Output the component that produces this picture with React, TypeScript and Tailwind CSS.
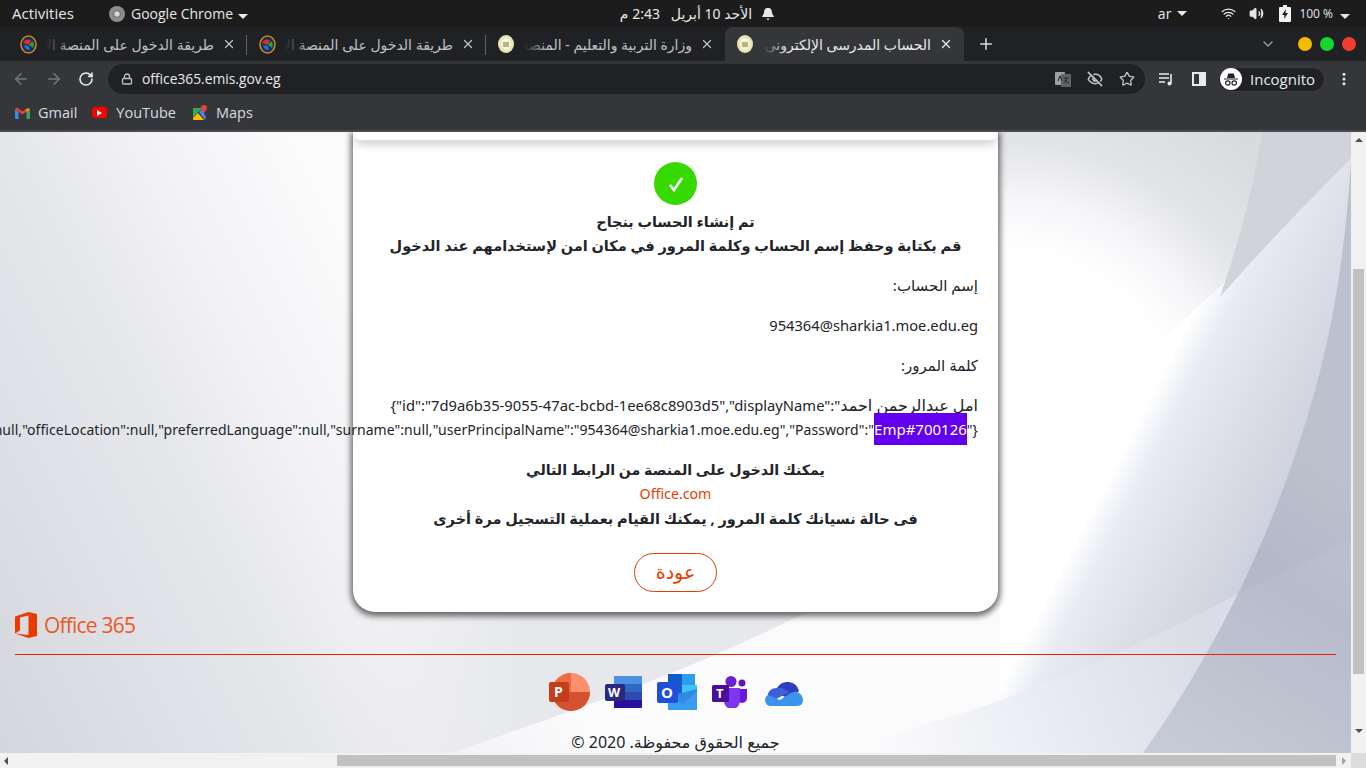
import { ArrowLeft, ArrowRight, ChevronDown, EllipsisVertical, EyeOff, Lock, Plus, RotateCw, Star, Volume2, Wifi, X } from 'lucide-react';

const arabic = 'font-["Noto_Sans","DejaVu_Sans",sans-serif]';

function Caret() {
  return <span className="inline-block h-0 w-0 border-x-[5px] border-t-[5px] border-x-transparent border-t-[#e8e8e8]" />;
}

function SchoolIcon() {
  return (
    <svg width="16" height="18" viewBox="0 0 16 18" className="shrink-0">
      <ellipse cx="8" cy="9" rx="8" ry="9" fill="#e9e6b4" />
      <ellipse cx="8" cy="9" rx="5" ry="6" fill="#f6f5e0" />
      <path d="M5 7h6v5H5z" fill="#b9b57c" />
    </svg>
  );
}

function PlatformIcon() {
  return (
    <svg width="17" height="19" viewBox="0 0 17 19" className="shrink-0">
      <ellipse cx="8.5" cy="9.5" rx="7.5" ry="8.5" fill="#1a2a5a" stroke="#c98a12" strokeWidth="1.6" />
      <path d="M3 8a6 6 0 0 1 8-3l-2 5z" fill="#d8302a" />
      <path d="M9 10l3-4a6 6 0 0 1 1 7z" fill="#2f9e44" />
      <path d="M4 10l5 1 1 4a6 6 0 0 1-6-5z" fill="#2a6fd0" />
    </svg>
  );
}

type TabProps = { title: string; icon: 'school' | 'platform'; active?: boolean; divider?: boolean };

function Tab({ title, icon, active, divider }: TabProps) {
  return (
    <div className={`relative flex h-[34px] w-[239px] shrink-0 items-center px-[11px] ${active ? 'rounded-t-lg bg-[#35363a]' : ''}`}>
      <span className="flex w-[18px] justify-center">{icon === 'school' ? <SchoolIcon /> : <PlatformIcon />}</span>
      <div dir="rtl" className={`relative ml-[9px] min-w-0 flex-1 overflow-hidden whitespace-nowrap text-[14px] ${active ? 'text-[#e8eaed]' : 'text-[#bdc1c6]'} ${arabic}`}>
        {title}
        <span className={`absolute inset-y-0 left-0 w-6 bg-gradient-to-r to-transparent ${active ? 'from-[#35363a]' : 'from-[#202124]'}`} />
      </div>
      <X size={14} strokeWidth={2.2} className={`ml-2 shrink-0 ${active ? 'text-[#e8eaed]' : 'text-[#bdc1c6]'}`} />
      {divider && <span className="absolute right-0 top-[8px] h-[20px] w-px bg-[#5f6368]" />}
    </div>
  );
}

function TopBar() {
  return (
    <header className='flex h-[27px] items-center bg-[#1c1c1c] text-[14px] text-[#e8e8e8] font-["Open_Sans",sans-serif]'>
      <span className="ml-3 w-[97px] text-[15px]">Activities</span>
      <svg width="16" height="16" viewBox="0 0 16 16" className="mr-1.5">
        <circle cx="8" cy="8" r="8" fill="#8d8d8d" />
        <circle cx="8" cy="8" r="3.4" fill="#d8d8d8" stroke="#5f5f5f" />
      </svg>
      <span>Google Chrome</span>
      <span className="ml-[5px]"><Caret /></span>
      <div className="flex flex-1 items-center justify-center pr-[12px]">
        <span dir="rtl" className={`text-[14px] ${arabic}`}>الأحد 10 أبريل&nbsp;&nbsp; 2:43 م</span>
        <svg width="12" height="14" viewBox="0 0 12 14" className="ml-[10px]">
          <path d="M6 1c3 0 4 2 4 5l2 4H0l2-4c0-3 1-5 4-5zM4.5 11.500h3L6 13.500z" fill="#e8e8e8" />
        </svg>
      </div>
      <span className="mr-[6px] text-[14px]">ar</span>
      <Caret />
      <Wifi size={15} className="ml-[34px]" />
      <Volume2 size={15} className="ml-[13px] fill-[#e8e8e8]" />
      <svg width="12" height="17" viewBox="0 0 12 17" className="ml-[15px]">
        <path d="M4 0h4v2h3a1 1 0 0 1 1 1v13a1 1 0 0 1-1 1H1a1 1 0 0 1-1-1V3a1 1 0 0 1 1-1h3z" fill="#f2f2f2" />
        <path d="M7 4L3 10h2.500L5 14l4-6H6.500z" fill="#1c1c1c" />
      </svg>
      <span className="ml-[8px] text-[12px]">100 %</span>
      <span className="ml-[7px] mr-4"><Caret /></span>
    </header>
  );
}

function TabStrip() {
  return (
    <div className="flex h-[34px] items-center bg-[#202124] pl-2">
      <Tab icon="platform" title="طريقة الدخول على المنصة الإلكترونية" divider />
      <Tab icon="platform" title="طريقة الدخول على المنصة الإلكترونية" divider />
      <Tab icon="school" title="وزارة التربية والتعليم - المنصة الإلكترونية" />
      <Tab icon="school" title="الحساب المدرسى الإلكترونى للطالب" active />
      <Plus size={18} className="ml-[13px] text-[#dadce0]" />
      <ChevronDown size={16} className="ml-auto mr-[22px] text-[#9aa0a6]" />
      <span className="h-[14px] w-[14px] rounded-full bg-[#f2bd00]" />
      <span className="ml-[8px] h-[14px] w-[14px] rounded-full bg-[#16d72e]" />
      <span className="ml-[8px] mr-[10px] h-[14px] w-[14px] rounded-full bg-[#f23d30]" />
    </div>
  );
}

function Toolbar() {
  return (
    <div className='flex h-[36px] items-center bg-[#35363a] text-[#e8eaed] font-["Open_Sans",sans-serif]'>
      <ArrowLeft size={18} className="ml-[12px] text-[#75777b]" />
      <ArrowRight size={18} className="ml-[15px] text-[#75777b]" />
      <RotateCw size={16} strokeWidth={2.4} className="ml-[15px] text-[#e8eaed]" />
      <div className="ml-[14px] flex h-[30px] w-[1037px] items-center rounded-full bg-[#202124]">
        <Lock size={12} strokeWidth={2.6} className="ml-[13px] text-[#bdc1c6]" />
        <span className="ml-[9px] text-[13.8px]">office365.emis.gov.eg</span>
        <svg width="16" height="16" viewBox="0 0 16 16" className="ml-auto">
          <rect x="0" y="1" width="10" height="13" rx="1" fill="#9aa0a6" />
          <rect x="6" y="3" width="10" height="13" rx="1" fill="#5f6368" />
          <path d="M3 10l2-5 2 5M9 7h5M11.500 7c0 3-1 4-2.500 5M10 9c1 2 2 3 4 3" stroke="#202124" fill="none" />
        </svg>
        <EyeOff size={16} strokeWidth={2.4} className="ml-[16px] text-[#bdc1c6]" />
        <Star size={16} strokeWidth={2} className="ml-[16px] mr-[10px] text-[#bdc1c6]" />
      </div>
      <svg width="16" height="16" viewBox="0 0 16 16" className="ml-[13px]">
        <path d="M1 3h10M1 7h10M1 11h6" stroke="#e8eaed" strokeWidth="1.600" />
        <path d="M13 3v9.500" stroke="#e8eaed" strokeWidth="1.600" />
        <circle cx="11.500" cy="12.500" r="2" fill="#e8eaed" />
      </svg>
      <span className="ml-[18px] box-border h-[14px] w-[14px] border-2 border-r-[7px] border-[#e8eaed]" />
      <div className="ml-[12px] flex h-[25px] w-[107px] items-center rounded-full border border-[#3c3d41] bg-[#202124] text-[15px]">
        <svg width="22" height="22" viewBox="0 0 22 22" className="ml-px">
          <circle cx="11" cy="11" r="11" fill="#fff" />
          <path d="M4 10.500h14v1H4zM7 10l1.200-4.500h5.600L15 10z" fill="#202124" />
          <circle cx="7.800" cy="15" r="2.200" fill="none" stroke="#202124" strokeWidth="1.200" />
          <circle cx="14.200" cy="15" r="2.200" fill="none" stroke="#202124" strokeWidth="1.200" />
        </svg>
        <span className="ml-2">Incognito</span>
      </div>
      <EllipsisVertical size={16} strokeWidth={2.6} className="ml-[11px] text-[#e8eaed]" />
    </div>
  );
}

function Bookmarks() {
  return (
    <div className='flex h-[33px] items-center bg-[#35363a] pb-[2px] text-[14.5px] text-[#dadce0] font-["Open_Sans",sans-serif]'>
      <svg width="15" height="12" viewBox="0 0 15 12" className="ml-[15px]">
        <path d="M0 2v9a1 1 0 0 0 1 1h2.500V5z" fill="#4285f4" />
        <path d="M11.500 5v7H14a1 1 0 0 0 1-1V2z" fill="#34a853" />
        <path d="M0 2l7.500 5.500L15 2 13 .500 7.500 4.500 2 .500z" fill="#ea4335" />
        <path d="M11.500 2.300L15 2l-3.500 3z" fill="#fbbc04" />
      </svg>
      <span className="ml-[8px]">Gmail</span>
      <span className="ml-[15px] flex h-[11px] w-[15px] items-center justify-center rounded-[3px] bg-[#f00]">
        <span className="h-0 w-0 border-y-[3px] border-l-[5px] border-y-transparent border-l-white" />
      </span>
      <span className="ml-[9px]">YouTube</span>
      <svg width="14" height="16" viewBox="0 0 14 16" className="ml-[17px]">
        <path d="M0 3h9L0 13z" fill="#34a853" />
        <path d="M0 13l5-5 6 7H1a1 1 0 0 1-1-1z" fill="#fbbc04" />
        <path d="M6 7l3-3 4 8-1 3z" fill="#4285f4" />
        <path d="M11 0a3 3 0 0 1 3 3c0 2-2 3-3 5-1-2-3-3-3-5a3 3 0 0 1 3-3z" fill="#ea4335" />
      </svg>
      <span className="ml-[9px]">Maps</span>
    </div>
  );
}

function PageBackground() {
  return (
    <svg className="absolute inset-0 h-full w-full" viewBox="0 132 1351 621" preserveAspectRatio="none">
      <defs>
        <linearGradient id="base" gradientUnits="userSpaceOnUse" x1="0" y1="800" x2="500" y2="550">
          <stop offset="0" stopColor="#d4d5db" />
          <stop offset="0.35" stopColor="#e0e1e6" />
          <stop offset="0.55" stopColor="#e6e7eb" />
          <stop offset="0.75" stopColor="#f2f2f5" />
          <stop offset="1" stopColor="#fbfbfc" />
        </linearGradient>
        <radialGradient id="upper" gradientUnits="userSpaceOnUse" cx="1000" cy="430" r="400">
          <stop offset="0.45" stopColor="#ffffff" />
          <stop offset="0.58" stopColor="#f6f6f9" />
          <stop offset="0.72" stopColor="#e3e4e8" />
          <stop offset="0.95" stopColor="#d9dade" />
        </radialGradient>
        <linearGradient id="middle" gradientUnits="userSpaceOnUse" x1="1035.5" y1="618.4" x2="1213" y2="710">
          <stop offset="0" stopColor="#ffffff" />
          <stop offset="0.15" stopColor="#e8ebf2" />
          <stop offset="0.45" stopColor="#dcdfe8" />
          <stop offset="1" stopColor="#c8ccd9" />
        </linearGradient>
        <linearGradient id="right" gradientUnits="userSpaceOnUse" x1="1180" y1="740" x2="1350" y2="480">
          <stop offset="0" stopColor="#c2c7d4" />
          <stop offset="0.6" stopColor="#b3b8c8" />
          <stop offset="1" stopColor="#bcc1cd" />
        </linearGradient>
        <linearGradient id="lower" gradientUnits="userSpaceOnUse" x1="880" y1="760" x2="1200" y2="640">
          <stop offset="0" stopColor="#fbfbfd" />
          <stop offset="1" stopColor="#dadde7" />
        </linearGradient>
        <linearGradient id="band" gradientUnits="userSpaceOnUse" x1="340" y1="0" x2="520" y2="0">
          <stop offset="0" stopColor="#e6e7ea" stopOpacity="0" />
          <stop offset="1" stopColor="#e7e8ec" />
        </linearGradient>
      </defs>
      <rect x="0" y="132" width="1351" height="621" fill="url(#base)" />
      {/* right half of the page: swoosh from the top corner down to the bottom */}
      <path d="M1351 158C1250 265 1120 380 1000 470V753H1351Z" fill="url(#middle)" />
      <path d="M990 132H1351V158C1250 265 1120 380 990 478Z" fill="url(#upper)" />
      <path d="M1262 132H1351V158C1310 200 1270 240 1220 297C1240 240 1255 180 1262 132Z" fill="#d2d3d8" />
      {/* grey band under the card */}
      <path d="M805 613C700 665 620 695 450 753H300V613Z" fill="url(#band)" />
      {/* lower band */}
      <path d="M1237 594C1160 635 1080 672 990 704C940 720 890 735 840 753H1150L1240 620Z" fill="url(#lower)" />
      {/* big arc to the right */}
      <path d="M1351 160C1345 260 1330 350 1300 440C1265 550 1210 660 1143 753H1351Z" fill="url(#right)" />
      <path d="M1237 594C1280 575 1320 555 1351 540V753H1143C1180 700 1210 650 1237 594Z" fill="#ffffff" opacity="0.06" />
    </svg>
  );
}

function OfficeApps() {
  return (
    <div className="mt-[16px] flex h-[42px] items-center justify-center">
      <svg width="41" height="38" viewBox="0 0 41 38">
        <circle cx="22" cy="19" r="19" fill="#ff8f6b" />
        <path d="M22 0a19 19 0 0 0-19 19h19z" fill="#ed6c47" />
        <path d="M3 19a19 19 0 0 0 38 0z" fill="#d35230" />
        <rect x="0" y="9" width="20" height="20" rx="2" fill="#c43e1c" />
        <text x="5" y="24" fill="#fff" fontSize="14" fontWeight="700" fontFamily="Open Sans">P</text>
      </svg>
      <svg width="37" height="32" viewBox="0 0 37 32" className="ml-[15px]">
        <path d="M9 0h27a1 1 0 0 1 1 1v7H9z" fill="#4d8fe0" />
        <path d="M9 8h28v8H9z" fill="#2f67c8" />
        <path d="M9 16h28v8H9z" fill="#2c4ab0" />
        <path d="M9 24h28v7a1 1 0 0 1-1 1H9z" fill="#2a0f9e" />
        <rect x="0" y="8" width="20" height="17" rx="2" fill="#2a2a7c" />
        <text x="3" y="21" fill="#fff" fontSize="12.500" fontWeight="700" fontFamily="Open Sans">W</text>
      </svg>
      <svg width="40" height="36" viewBox="0 0 40 36" className="ml-[15px]">
        <path d="M11 0h27v11H11z" fill="#0f5cc8" />
        <path d="M25 0h13v11H25z" fill="#2f9cf0" />
        <path d="M25 11h15v10H25z" fill="#3fc4f8" />
        <path d="M11 11h14v10H11z" fill="#1f58d6" />
        <path d="M11 21l14-2 15-4v21H11z" fill="#2f8ae6" />
        <path d="M11 22l15 8 14-13v19H11z" fill="#3a9cf0" />
        <rect x="0" y="8" width="21" height="21" rx="2" fill="#2050d8" />
        <text x="4" y="24" fill="#fff" fontSize="15" fontWeight="700" fontFamily="Open Sans">O</text>
      </svg>
      <svg width="36" height="32" viewBox="0 0 36 32" className="ml-[15px]">
        <circle cx="19" cy="5.500" r="5.500" fill="#6a1fd0" />
        <circle cx="30" cy="7" r="3.500" fill="#5a16b8" />
        <path d="M25 13h10v9a5 5 0 0 1-10 0z" fill="#6a16dc" />
        <path d="M10 12h18v13a8 8 0 0 1-16 0z" fill="#8035f0" />
        <rect x="0" y="9" width="17" height="17" rx="1.500" fill="#4a0f9a" />
        <text x="4" y="22" fill="#fff" fontSize="13" fontWeight="700" fontFamily="Open Sans">T</text>
      </svg>
      <svg width="41" height="27" viewBox="0 0 41 27" className="ml-[14px]">
        <path d="M15 9a12 12 0 0 1 22 3l-10 8-12-6z" fill="#2c3fc0" />
        <path d="M15 9c-7 0-10 5-9 9l4 4 18-9-8-4z" fill="#3f5ed8" />
        <path d="M6 16a6 6 0 0 0 2 11h27c4 0 6-3 6-6 0-5-5-9-9-8-5 1-12 7-14 8z" fill="#3a94ee" />
      </svg>
    </div>
  );
}

function Card() {
  return (
    <section className={`mx-auto h-[480px] w-[645px] shrink-0 rounded-b-[22px] bg-white text-[#212529] shadow-[0_2px_6px_2px_rgba(0,0,0,0.6)] ${arabic}`}>
      <div className="mx-auto h-[8px] w-[641px] rounded-b-[5px] bg-white shadow-[0_4px_8px_rgba(0,0,0,0.22)]" />
      <div className="mx-auto mt-[22px] flex h-[43px] w-[43px] items-center justify-center rounded-full bg-[#36d900]">
        <svg width="18" height="16" viewBox="0 0 18 16" fill="none">
          <path d="M3 9l4 5L15 2" stroke="#fff" strokeWidth="2.600" />
        </svg>
      </div>
      <div dir="rtl" className="mt-[5px] text-center font-bold leading-6">
        <p className="text-[14.4px]">تم إنشاء الحساب بنجاح</p>
        <p className="-mt-px text-[14.5px]">قم بكتابة وحفظ إسم الحساب وكلمة المرور في مكان امن لإستخدامهم عند الدخول</p>
      </div>
      <div dir="rtl" className="mt-[16px] px-[20px] text-[15px] leading-6">
        <p>إسم الحساب:</p>
        <p className="mt-[16px] text-[14.7px]"><bdi dir="ltr">954364@sharkia1.moe.edu.eg</bdi></p>
        <p className="mt-[16px]">كلمة المرور:</p>
      </div>
      <div dir="ltr" className="mt-[16px] flex flex-col items-end pr-[20px] leading-6">
        <p className="whitespace-nowrap text-[14.75px]">
          {'{"id":"7d9a6b35-9055-47ac-bcbd-1ee68c8903d5","displayName":"'}
          <span className="text-[16px]">امل عبدالرحمن احمد</span>
        </p>
        <p className="whitespace-nowrap text-[14px] tracking-[0.05px]">
          {'null,"officeLocation":null,"preferredLanguage":null,"surname":null,"userPrincipalName":"954364@sharkia1.moe.edu.eg","Password":"'}
          <span className="bg-[#6200ee] py-[6px] text-[15px] tracking-normal text-white">Emp#700126</span>
          {'"}'}
        </p>
      </div>
      <div dir="rtl" className="mt-[16px] text-center leading-6">
        <p className="text-[14.2px] font-bold">يمكنك الدخول على المنصة من الرابط التالي</p>
        <p dir="ltr" className="text-[14.2px] text-[#eb3c00]">Office.com</p>
        <p className="text-[14.5px] font-bold">فى حالة نسيانك كلمة المرور , يمكنك القيام بعملية التسجيل مرة أخرى</p>
      </div>
      <div className="mt-[23px] flex justify-center">
        <button className="h-[39px] w-[83px] rounded-full border border-[#eb3c00] bg-white text-[19px] text-[#eb3c00]">عودة</button>
      </div>
    </section>
  );
}

function Footer() {
  return (
    <footer className={`px-[15px] ${arabic}`}>
      <div className="flex h-[25px] items-center">
        <svg width="22" height="26" viewBox="0 0 22 26">
          <path d="M0 4.500L13.500 0 22 2v22l-8.500 2L0 21.500zM13.500 3.500L5 5.500v13l-5 3 13.500 1.500z" fill="#eb3c00" fillRule="evenodd" />
        </svg>
        <span className='ml-[7px] mt-[2px] text-[21px] leading-none tracking-[-0.8px] text-[#eb5a1e] font-["Open_Sans",sans-serif]'>Office 365</span>
      </div>
      <hr className="mt-[17px] border-0 border-t border-[#e8200a]" />
      <OfficeApps />
      <p dir="rtl" className="mt-[17px] text-center text-[16px] leading-6 text-[#212529]">جميع الحقوق محفوظة. 2020 ©</p>
    </footer>
  );
}

export default function App() {
  return (
    <div className="flex h-screen w-screen flex-col overflow-hidden bg-[#35363a]">
      <TopBar />
      <TabStrip />
      <Toolbar />
      <Bookmarks />
      <div className="h-[2px] bg-[#4a4b4f]" />
      <div className="flex min-h-0 flex-1">
        <div className="flex min-w-0 flex-1 flex-col">
          <main className="relative min-h-0 flex-1 overflow-hidden">
            <PageBackground />
            <div className="relative">
              <Card />
              <Footer />
            </div>
          </main>
          <div className="flex h-[15px] shrink-0 items-center bg-[#f1f1f1]">
            <span className="ml-[4px] h-0 w-0 border-y-[4px] border-r-[4px] border-y-transparent border-r-[#505050]" />
            <span className="ml-[329px] h-[11px] w-[999px] bg-[#c1c1c1]" />
            <span className="ml-[6px] h-0 w-0 border-y-[4px] border-l-[4px] border-y-transparent border-l-[#a3a3a3]" />
          </div>
        </div>
        <div className="flex w-[15px] shrink-0 flex-col items-center bg-[#f1f1f1]">
          <span className="mt-[6px] h-0 w-0 border-x-[4px] border-b-[4px] border-x-transparent border-b-[#505050]" />
          <span className="mt-[127px] h-[405px] w-[11px] bg-[#c1c1c1]" />
          <span className="mb-[20px] mt-auto h-0 w-0 border-x-[4px] border-t-[4px] border-x-transparent border-t-[#505050]" />
          <span className="h-[15px] w-[15px] bg-[#dcdcdc]" />
        </div>
      </div>
    </div>
  );
}
